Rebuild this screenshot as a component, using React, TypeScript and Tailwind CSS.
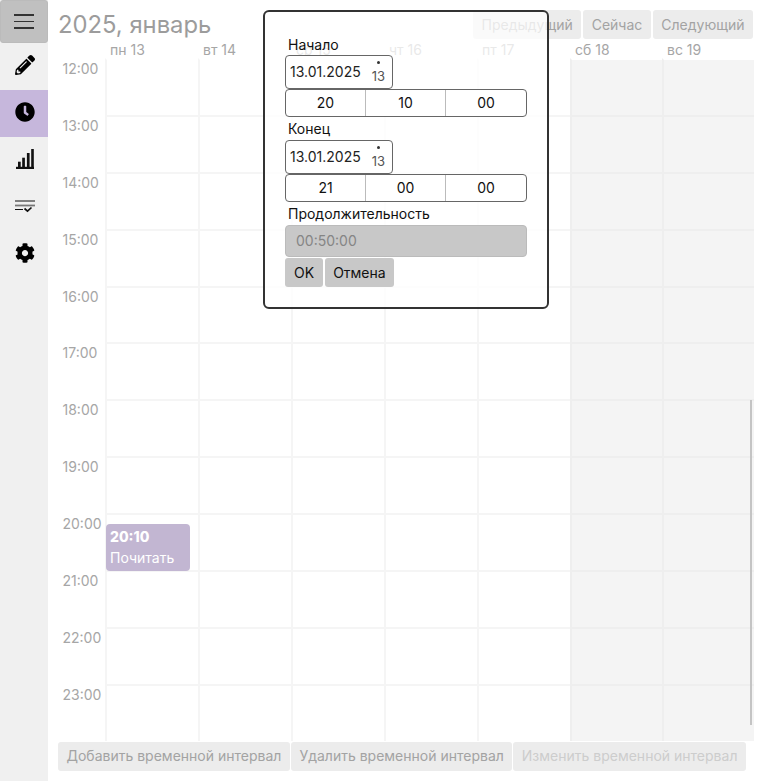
import { FaClock, FaCog, FaPencilAlt } from 'react-icons/fa'

const hours = ['12:00', '13:00', '14:00', '15:00', '16:00', '17:00', '18:00', '19:00', '20:00', '21:00', '22:00', '23:00']
const days = ['пн 13', 'вт 14', 'ср 15', 'чт 16', 'пт 17', 'сб 18', 'вс 19']

function BarsIcon() {
  return (
    <svg width="18" height="20" viewBox="0 0 18 20" fill="#111">
      <rect x="0" y="17.8" width="18" height="2.2" />
      <rect x="2" y="12.7" width="2.7" height="6" />
      <rect x="6.2" y="8.7" width="2.7" height="10" />
      <rect x="10.9" y="4" width="2.7" height="14" />
      <rect x="15.2" y="0" width="2.6" height="18" />
    </svg>
  )
}

function TasksIcon() {
  return (
    <svg width="20" height="13" viewBox="0 0 20 13" fill="none" stroke="#111" strokeWidth="1.1">
      <path d="M0 1h20M0 9.5h8" />
      <path d="M0 5.5h20" stroke="#777" strokeWidth="1.8" />
      <path d="M9.5 8.5l3 2.7 4-3.7" strokeWidth="1.7" />
    </svg>
  )
}

function SideItem({ active, children }: { active?: boolean; children: React.ReactNode }) {
  return (
    <div className={`h-[47px] pb-[3px] pl-[2px] flex items-center justify-center ${active ? 'bg-[#c6b7dc]' : ''}`}>
      {children}
    </div>
  )
}

function TopButton({ label }: { label: string }) {
  return <button className="h-[29px] px-[8.5px] rounded-[3px] bg-[#ececec] text-[#a3a3a3] text-sm">{label}</button>
}

function BottomButton({ label, off }: { label: string; off?: boolean }) {
  return (
    <button className={`h-[29px] px-[8.5px] rounded-[3px] bg-[#ececec] text-sm ${off ? 'text-[#cdcdcd]' : 'text-[#a3a3a3]'}`}>
      {label}
    </button>
  )
}

function DateField() {
  return (
    <div className="w-[108px] h-[34px] border border-[#666] rounded-[4px] flex items-center pl-[4px] bg-white">
      <span className="text-sm text-[#222]">13.01.2025</span>
      <span className="ml-[11px] flex flex-col items-center leading-none text-[#555]">
        <span className="w-[3px] h-[3px] rounded-full bg-[#333] mb-[6px]" />
        <span className="text-[13px]">13</span>
      </span>
    </div>
  )
}

function TimeField({ values }: { values: string[] }) {
  return (
    <div className="w-[242px] h-[28px] border border-[#666] rounded-[4px] grid grid-cols-3 divide-x divide-[#bbb] bg-white">
      {values.map((v, i) => (
        <div key={i} className="flex items-center justify-center text-sm text-[#111]">{v}</div>
      ))}
    </div>
  )
}

export default function App() {
  return (
    <div className="relative w-[764px] h-[781px] flex bg-white overflow-hidden font-['Inter',sans-serif]">
      <aside className="w-[48px] h-full bg-[#f0f0f0] flex flex-col">
        <div className="h-[43px] rounded-[3px] bg-[#c0c0c0] border border-[#bbb] flex flex-col items-center justify-center gap-[5px]">
          <span className="w-[20px] h-[1.5px] bg-[#333]" />
          <span className="w-[20px] h-[1.5px] bg-[#333]" />
          <span className="w-[20px] h-[1.5px] bg-[#333]" />
        </div>
        <SideItem><FaPencilAlt className="w-[20px] h-[20px] text-black" /></SideItem>
        <SideItem active><FaClock className="w-[20px] h-[20px] text-black" /></SideItem>
        <SideItem><BarsIcon /></SideItem>
        <SideItem><TasksIcon /></SideItem>
        <SideItem><FaCog className="w-[20px] h-[20px] text-black" /></SideItem>
      </aside>

      <main className="relative flex-1 flex flex-col pr-[10px]">
        <div className="h-[40px] flex items-end justify-between">
          <h1 className="pl-[10px] text-[23.8px] leading-[30px] text-[#9c9c9c]">2025, январь</h1>
          <div className="flex gap-[2px] mb-[1px] mr-[1px]">
            <TopButton label="Предыдущий" />
            <TopButton label="Сейчас" />
            <TopButton label="Следующий" />
          </div>
        </div>

        <div className="grid grid-cols-[56.5px_repeat(5,93px)_92px_1fr] h-[18px]">
          <div />
          {days.map(d => (
            <div key={d} className="pl-[5.5px] text-sm leading-[20px] text-[#a6a6a6]">{d}</div>
          ))}
        </div>

        <div className="relative grid grid-cols-[56.5px_repeat(5,93px)_92px_1fr] grid-rows-[repeat(11,56.9px)_57px]">
          {hours.map((h, r) => (
            <div key={h} className="contents">
              <div className="pl-[14.5px] pt-[3px] text-sm leading-[16px] text-[#a6a6a6]">{h}</div>
              {days.map((d, i) => (
                <div
                  key={d}
                  className={`border-l-2 border-t-2 bg-clip-padding ${i > 4 ? 'bg-[#f4f4f4] border-l-[#eeeeee]' : 'border-l-[#f5f5f5]'} ${r === 0 ? 'border-t-transparent' : i > 4 ? 'border-t-[#eeeeee]' : 'border-t-[#f5f5f5]'}`}
                />
              ))}
            </div>
          ))}
          <div className="absolute left-[58px] top-[466px] w-[84px] h-[47px] rounded-[4px] bg-[#c2b6d2] px-[4px] pt-[4px] text-white">
            <div className="text-sm font-extrabold leading-[18px]">20:10</div>
            <div className="text-sm leading-[24px]">Почитать</div>
          </div>
          <div className="absolute left-[702px] top-[342px] w-[2px] h-[325px] bg-[#c4c4c4]" />
        </div>

        <div className="flex gap-[1px] pl-[10px] pt-[1px]">
          <BottomButton label="Добавить временной интервал" />
          <BottomButton label="Удалить временной интервал" />
          <BottomButton label="Изменить временной интервал" off />
        </div>
      </main>

      <div className="absolute left-[263px] top-[10px] w-[286px] h-[299px] bg-white/75 border-2 border-[#333] rounded-[6px] pl-[20px] pt-[22px] flex flex-col">
        <label className="pl-[3px] text-sm leading-[21px] text-[#111]">Начало</label>
        <DateField />
        <TimeField values={['20', '10', '00']} />
        <label className="pl-[3px] mt-[1px] text-sm leading-[22px] text-[#111]">Конец</label>
        <DateField />
        <TimeField values={['21', '00', '00']} />
        <label className="pl-[3px] mt-[1px] text-sm leading-[22px] text-[#111]">Продолжительность</label>
        <div className="w-[242px] h-[32px] rounded-[4px] bg-[#c8c8c8] border border-[#bbb] pl-[10px] flex items-center text-sm text-[#858585]">00:50:00</div>
        <div className="flex gap-[2px] mt-[1px]">
          <button className="h-[29px] px-[9px] rounded-[3px] bg-[#c8c8c8] text-sm text-[#111]">OK</button>
          <button className="h-[29px] px-[8px] rounded-[3px] bg-[#c8c8c8] text-sm text-[#111]">Отмена</button>
        </div>
      </div>
    </div>
  )
}
